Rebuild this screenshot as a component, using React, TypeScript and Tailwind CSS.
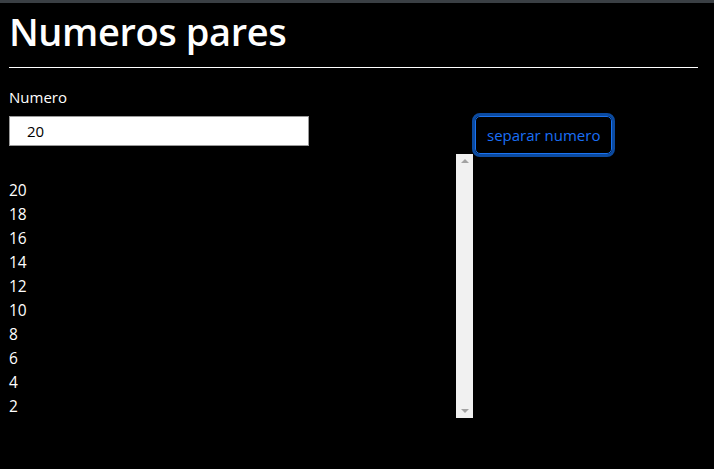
import React from "react";

const numeros = [20, 18, 16, 14, 12, 10, 8, 6, 4, 2];

export default function App() {
  return (
    <div className="min-h-[469px] bg-black text-white" style={{ fontFamily: '"Open Sans", "Noto Sans", sans-serif' }}>
      <div className="h-[3px] bg-[#3a3f44]" />
      <div className="px-[9px]">
        <h1 className="text-[38px] leading-[54px] font-semibold mt-[1px] tracking-[-0.4px]">Numeros pares</h1>
        <hr className="mt-[9px] mr-[7px] border-t border-white" />

        <div className="flex">
          <div className="w-[464px]">
            <label className="block text-[15px] leading-[22px] mt-[18px]">Numero</label>
            <input
              type="text"
              defaultValue="20"
              className="mt-[8px] h-[30px] w-[300px] border border-[#9a9a9a] bg-white pl-[17px] text-[15px] text-black outline-none"
            />
            <div className="mt-[8px] flex h-[264px]">
              <div className="flex-1 text-[15.5px] leading-[24px]">
                <div className="h-[24px]" />
                {numeros.map((n) => (
                  <div key={n}>{n}</div>
                ))}
              </div>
              <div className="flex w-[17px] flex-col items-center justify-between bg-[#f1f1f1] py-[5px]">
                <div className="h-0 w-0 border-x-[4px] border-b-[4px] border-x-transparent border-b-[#a3a3a3]" />
                <div className="h-0 w-0 border-x-[4px] border-t-[4px] border-x-transparent border-t-[#a3a3a3]" />
              </div>
            </div>
          </div>
          <div className="pt-[48px] pl-[2px]">
            <button className="h-[38px] rounded-[5px] border border-[#1a73f0] px-[11px] text-[15px] text-[#1a6ff5] outline outline-[3px] outline-[#0b4aa0]">
              separar numero
            </button>
          </div>
        </div>
      </div>
    </div>
  );
}
